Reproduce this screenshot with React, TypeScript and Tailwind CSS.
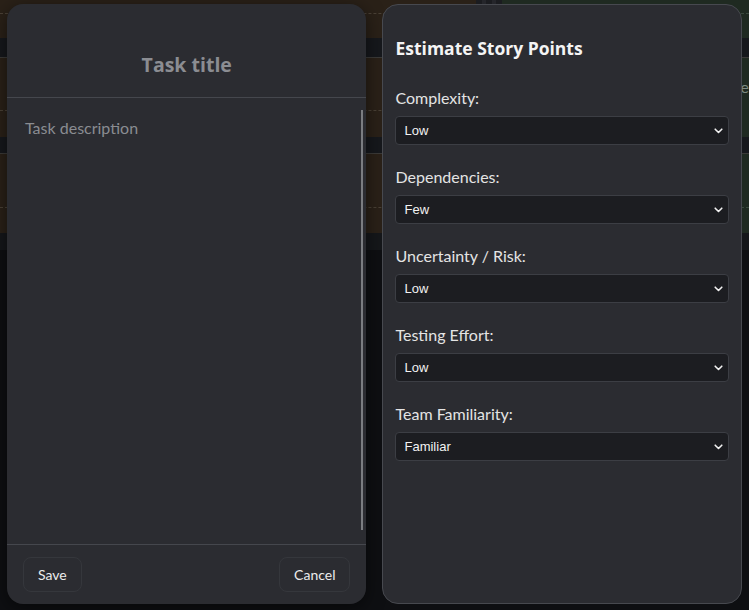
import React from "react";

function BgColumn({ width, color, line, text }: { width: string; color: string; line: string; text?: boolean }) {
  return (
    <div className={`flex flex-col ${width}`}>
      <div className={`h-[38px] ${color}`}>
        <div className={`mt-[13px] border-t border-dashed ${line}`} />
      </div>
      <div className="h-[19px] bg-[#16181c]" />
      <div className="h-px bg-[#3b3a38]" />
      <div className={`h-[79px] ${color}`}>
        {text ? (
          <div className="pl-[239px] pt-[17px] text-[16px] leading-6 text-[#7d8a82]">e</div>
        ) : (
          <div className={`mt-[52px] border-t border-dashed ${line}`} />
        )}
      </div>
      <div className="h-[16px] bg-[#16181c]" />
      <div className="h-px bg-[#3b3a38]" />
      <div className={`h-[79px] ${color}`}>
        <div className={`mt-[53px] border-t border-dashed ${line}`} />
      </div>
      <div className="h-[17px] bg-[#15171a]" />
      <div className="flex-1 bg-[#0e0f12]" />
    </div>
  );
}

function Chevron() {
  return (
    <svg width="9" height="6" viewBox="0 0 9 6" fill="none">
      <polyline points="1.2,1.2 4.5,4.5 7.8,1.2" stroke="#f2f2f2" strokeWidth="1.6" strokeLinecap="round" strokeLinejoin="round" />
    </svg>
  );
}

export default function App() {
  const fields: [string, string][] = [
    ["Complexity:", "Low"],
    ["Dependencies:", "Few"],
    ["Uncertainty / Risk:", "Low"],
    ["Testing Effort:", "Low"],
    ["Team Familiarity:", "Familiar"],
  ];
  return (
    <div className="relative h-[610px] w-[749px] overflow-hidden bg-[#0e0f12] font-[Lato,'Noto_Sans',sans-serif]">
      <div className="flex h-full">
        <BgColumn width="w-[478px]" color="bg-[#2a2118]" line="border-[#4a4136]" />
        <div className="flex w-[26px] flex-col bg-[#1b1c20]">
          <div className="flex h-[38px] gap-[6px] px-[6px]">
            <div className="w-[6px] bg-[#25262b]" />
            <div className="w-[6px] bg-[#25262b]" />
          </div>
          <div className="flex-1 bg-[#0e0f12]" />
        </div>
        <BgColumn width="flex-1" color="bg-[#1f2a21]" line="border-[#3b4a3e]" text />
      </div>

      <div className="absolute inset-0 flex items-start gap-4 px-[7px] pt-1">
        {/* Task modal */}
        <div className="flex h-[600px] w-[360px] flex-col rounded-2xl bg-[#2b2c31] shadow-[0_4px_18px_rgba(0,0,0,0.5)]">
          <div className="border-b border-[#45474d] pb-[17px] pt-[46px] text-center font-['Open_Sans',sans-serif] text-[19.5px] font-bold leading-[30px] text-[#8b8d92]">
            Task title
          </div>
          <div className="flex flex-1">
            <div className="flex-1 px-[18px] pt-[18px] text-[16px] leading-6 text-[#8a8c91]">Task description</div>
            <div className="mb-[14px] mr-[3px] mt-[12px] w-[2px] bg-[#7b7d81]" />
          </div>
          <div className="flex h-[60px] items-center justify-between border-t border-[#45474d] px-4">
            <button className="h-[35px] rounded-lg border border-[#35373c] px-[14px] text-[14px] text-[#ececec]">Save</button>
            <button className="h-[35px] rounded-lg border border-[#35373c] px-[14px] text-[14px] text-[#ececec]">Cancel</button>
          </div>
        </div>

        {/* Estimate modal */}
        <div className="flex h-[600px] w-[360px] flex-col rounded-2xl border border-[#47494f] bg-[#2b2c31] px-3 pt-[30px]">
          <div className="font-['Open_Sans',sans-serif] text-[17.5px] font-bold leading-[27px] text-[#f4f4f4]">Estimate Story Points</div>
          <div className="mt-6 flex flex-col gap-5">
            {fields.map(([label, value]) => (
              <div key={label} className="flex flex-col">
                <div className="text-[16px] leading-6 text-[#e4e4e4]">{label}</div>
                <div className="mt-[6px] flex h-[29px] items-center justify-between rounded border border-[#3c3e44] bg-[#1c1d21] pl-2 pr-[5px]">
                  <span className="font-['Liberation_Sans',Arial,sans-serif] text-[13px] text-[#f2f2f2]">{value}</span>
                  <Chevron />
                </div>
              </div>
            ))}
          </div>
        </div>
      </div>
    </div>
  );
}
